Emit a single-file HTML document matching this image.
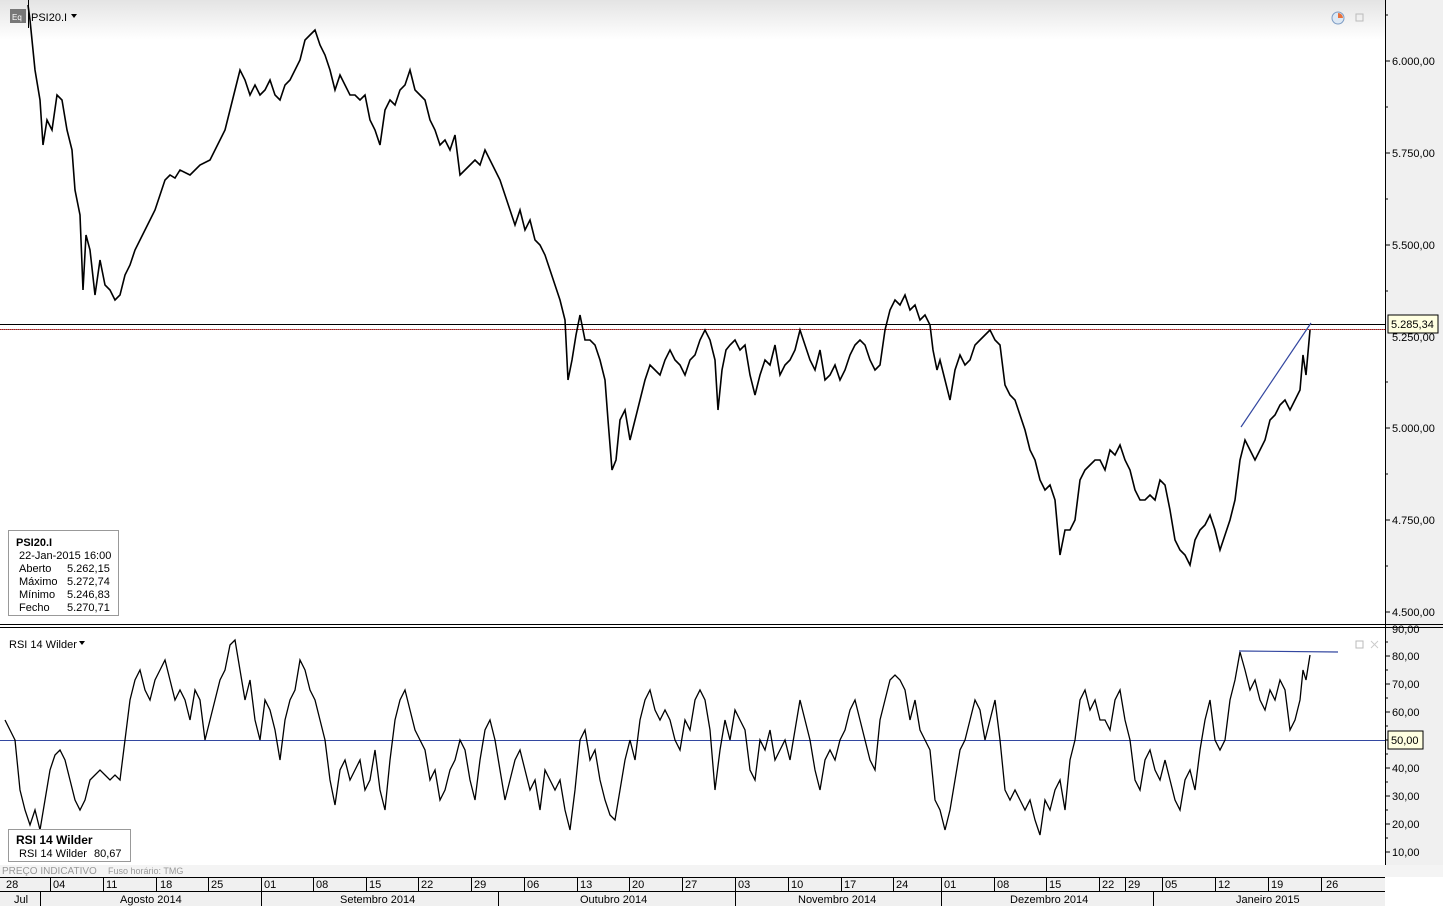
<!DOCTYPE html>
<html><head><meta charset="utf-8"><style>
*{margin:0;padding:0;box-sizing:border-box}
body{width:1443px;height:906px;overflow:hidden;background:#fff;font-family:"Liberation Sans","DejaVu Sans",sans-serif;position:relative}
.t{position:absolute;font-size:11px;color:#000;white-space:nowrap}
</style></head><body>
<svg width="1443" height="906" style="position:absolute;left:0;top:0" font-family="Liberation Sans, DejaVu Sans, sans-serif" font-size="11">
<defs><linearGradient id="g" x1="0" y1="0" x2="0" y2="1"><stop offset="0" stop-color="#e4e4e4"/><stop offset="1" stop-color="#ffffff"/></linearGradient></defs>
<rect x="0" y="0" width="1385" height="40" fill="url(#g)"/>
<rect x="1385" y="0" width="58" height="877" fill="#f0f0f0"/>
<line x1="1385.5" y1="0" x2="1385.5" y2="877" stroke="#000"/>
<!-- price axis ticks -->
<g stroke="#000">
<line x1="1385" y1="61" x2="1390" y2="61"/><line x1="1385" y1="153" x2="1390" y2="153"/><line x1="1385" y1="245" x2="1390" y2="245"/><line x1="1385" y1="428" x2="1390" y2="428"/><line x1="1385" y1="520" x2="1390" y2="520"/><line x1="1385" y1="612" x2="1390" y2="612"/>
<line x1="1385" y1="15" x2="1388" y2="15"/><line x1="1385" y1="107" x2="1388" y2="107"/><line x1="1385" y1="199" x2="1388" y2="199"/><line x1="1385" y1="291" x2="1388" y2="291"/><line x1="1385" y1="382" x2="1388" y2="382"/><line x1="1385" y1="474" x2="1388" y2="474"/><line x1="1385" y1="566" x2="1388" y2="566"/>
</g>
<g fill="#000">
<text x="1392" y="65">6.000,00</text><text x="1392" y="157">5.750,00</text><text x="1392" y="249">5.500,00</text><text x="1392" y="341">5.250,00</text><text x="1392" y="432">5.000,00</text><text x="1392" y="524">4.750,00</text><text x="1392" y="616">4.500,00</text>
</g>
<!-- horizontal lines -->
<line x1="0" y1="324.5" x2="1385" y2="324.5" stroke="#000"/>
<line x1="0" y1="329.5" x2="1385" y2="329.5" stroke="#c00" stroke-dasharray="1,1"/>
<line x1="0" y1="329.5" x2="1385" y2="329.5" stroke="#000" stroke-dasharray="1,1" stroke-dashoffset="1" opacity=".5"/>
<rect x="1388" y="315" width="50" height="18" fill="#ffffe1" stroke="#000"/>
<text x="1391" y="328">5.285,34</text>
<!-- price line -->
<polyline fill="none" stroke="#000" stroke-width="1.6" points="28,5 30,20 35,70 40,100 43,145 47,120 52,130 57,95 62,100 67,130 72,150 75,190 80,215 83,290 86,235 90,250 95,295 100,260 105,285 110,290 115,300 120,295 125,275 130,265 135,250 140,240 145,230 150,220 155,210 160,195 165,180 170,175 175,178 180,170 190,175 200,165 210,160 215,150 220,140 225,130 230,110 235,90 240,70 245,80 250,95 255,85 260,95 265,90 270,80 275,95 280,100 285,85 290,80 295,70 300,60 305,40 310,35 315,30 320,45 325,55 330,70 335,90 340,75 345,85 350,95 355,95 360,100 365,95 370,120 375,130 380,145 385,110 390,100 395,105 400,90 405,85 410,70 415,90 420,95 425,100 430,120 435,130 440,145 445,140 450,150 455,135 460,175 465,170 470,165 475,160 480,165 485,150 490,160 495,170 500,180 505,195 510,210 515,225 520,210 525,230 530,220 535,240 540,245 545,255 550,270 555,285 560,300 565,320 568,380 572,360 576,335 580,315 585,340 590,340 595,345 600,360 605,380 608,420 612,470 616,460 620,420 625,410 630,440 635,420 640,400 645,380 650,365 655,370 660,375 665,360 670,350 675,360 680,365 685,375 690,360 695,355 700,340 705,330 710,340 715,360 718,410 722,370 726,350 730,345 735,340 740,350 745,345 750,375 755,395 760,375 765,360 770,365 775,345 780,375 785,365 790,360 795,350 800,330 805,345 810,360 815,370 820,350 825,380 830,375 835,365 840,380 845,370 850,355 855,345 860,340 865,345 870,360 875,370 880,365 885,330 890,310 895,300 900,305 905,295 910,310 915,305 920,320 925,315 930,325 933,350 937,370 940,360 945,380 950,400 955,370 960,355 965,365 970,360 975,345 980,340 985,335 990,330 995,340 1000,345 1005,385 1010,395 1015,400 1020,415 1025,430 1030,450 1035,460 1040,480 1045,490 1050,485 1055,500 1060,555 1065,530 1070,530 1075,520 1080,480 1085,470 1090,465 1095,460 1100,460 1105,470 1110,450 1115,455 1120,445 1125,460 1130,470 1135,490 1140,500 1145,500 1150,495 1155,500 1160,480 1165,485 1170,510 1175,540 1180,550 1185,555 1190,565 1195,540 1200,530 1205,525 1210,515 1215,530 1220,550 1225,535 1230,520 1235,500 1240,460 1245,440 1250,450 1255,460 1260,450 1265,440 1270,420 1275,415 1280,405 1285,400 1290,410 1295,400 1300,390 1303,355 1306,375 1310,330"/>
<line x1="1241" y1="427" x2="1311" y2="323" stroke="#3347a0" stroke-width="1.2"/>
<!-- header -->
<rect x="10" y="9" width="16" height="14" fill="#777"/><text x="12" y="20" fill="#fff" font-size="8">Eq</text>
<line x1="28.5" y1="0" x2="28.5" y2="28" stroke="#000"/>
<text x="31" y="21" fill="#000">PSI20.I</text><path d="M71 14h6l-3 4z" fill="#000"/>
<circle cx="1338" cy="18" r="6" fill="#dde8f4" stroke="#7d9cc4"/><path d="M1338 18v-5a5 5 0 0 1 5 5z" fill="#e8703a"/>
<rect x="1356" y="14" width="7" height="7" fill="none" stroke="#bbb"/>
<!-- info box -->
<rect x="8.5" y="530.5" width="110" height="85" fill="#fff" stroke="#999"/>
<text x="16" y="546" font-weight="bold">PSI20.I</text>
<text x="19" y="559">22-Jan-2015 16:00</text>
<text x="19" y="572">Aberto</text><text x="67" y="572">5.262,15</text>
<text x="19" y="585">Máximo</text><text x="67" y="585">5.272,74</text>
<text x="19" y="598">Mínimo</text><text x="67" y="598">5.246,83</text>
<text x="19" y="611">Fecho</text><text x="67" y="611">5.270,71</text>
<!-- separator -->
<line x1="0" y1="624.5" x2="1443" y2="624.5" stroke="#000"/>
<line x1="0" y1="627.5" x2="1443" y2="627.5" stroke="#000"/>
<!-- RSI axis -->
<g stroke="#000">
<line x1="1385" y1="656" x2="1390" y2="656"/><line x1="1385" y1="684" x2="1390" y2="684"/><line x1="1385" y1="712" x2="1390" y2="712"/><line x1="1385" y1="740" x2="1390" y2="740"/><line x1="1385" y1="768" x2="1390" y2="768"/><line x1="1385" y1="796" x2="1390" y2="796"/><line x1="1385" y1="824" x2="1390" y2="824"/><line x1="1385" y1="852" x2="1390" y2="852"/>
<line x1="1385" y1="642" x2="1388" y2="642"/><line x1="1385" y1="670" x2="1388" y2="670"/><line x1="1385" y1="698" x2="1388" y2="698"/><line x1="1385" y1="726" x2="1388" y2="726"/><line x1="1385" y1="754" x2="1388" y2="754"/><line x1="1385" y1="782" x2="1388" y2="782"/><line x1="1385" y1="810" x2="1388" y2="810"/><line x1="1385" y1="838" x2="1388" y2="838"/>
</g>
<g fill="#000">
<text x="1392" y="633">90,00</text><text x="1392" y="660">80,00</text><text x="1392" y="688">70,00</text><text x="1392" y="716">60,00</text><text x="1392" y="772">40,00</text><text x="1392" y="800">30,00</text><text x="1392" y="828">20,00</text><text x="1392" y="856">10,00</text>
</g>
<line x1="0" y1="740.5" x2="1385" y2="740.5" stroke="#3347a0"/>
<rect x="1388" y="731" width="35" height="18" fill="#ffffe1" stroke="#000"/>
<text x="1391" y="744">50,00</text>
<text x="9" y="648" fill="#000">RSI 14 Wilder</text><path d="M79 641h6l-3 4z" fill="#000"/>
<rect x="1356" y="641" width="7" height="7" fill="none" stroke="#bbb"/>
<path d="M1371 641l7 7M1378 641l-7 7" stroke="#ccc"/>
<polyline fill="none" stroke="#000" stroke-width="1.3" points="5,720 10,730 15,740 20,790 25,810 30,825 35,810 40,830 45,800 50,770 55,755 60,750 65,760 70,780 75,800 80,810 85,800 90,780 95,775 100,770 105,775 110,780 115,775 120,780 125,740 130,700 135,680 140,670 145,690 150,700 155,680 160,670 165,660 170,680 175,700 180,690 185,700 190,720 195,690 200,700 205,740 210,720 215,700 220,680 225,670 230,645 235,640 240,670 245,700 250,680 255,720 260,740 265,700 270,710 275,730 280,760 285,720 290,700 295,690 300,660 305,670 310,690 315,700 320,720 325,740 330,780 335,805 340,770 345,760 350,780 355,770 360,760 365,790 370,780 375,750 380,790 385,810 390,760 395,720 400,700 405,690 410,710 415,730 420,740 425,750 430,780 435,770 440,800 445,790 450,770 455,760 460,740 465,750 470,780 475,800 480,760 485,730 490,720 495,740 500,770 505,800 510,780 515,760 520,750 525,770 530,790 535,780 540,810 545,770 550,780 555,790 560,780 565,810 570,830 575,790 580,740 585,730 590,760 595,750 600,780 605,800 610,815 615,820 620,790 625,760 630,740 635,760 640,720 645,700 650,690 655,710 660,720 665,710 670,720 675,740 680,750 685,720 690,730 695,700 700,690 705,700 710,730 715,790 720,750 725,720 730,740 735,710 740,720 745,730 750,770 755,780 760,740 765,750 770,730 775,760 780,750 785,740 790,760 795,730 800,700 805,720 810,740 815,770 820,790 825,760 830,750 835,760 840,740 845,730 850,710 855,700 860,720 865,740 870,760 875,770 880,720 885,700 890,680 895,675 900,680 905,690 910,720 915,700 920,730 925,740 930,750 935,800 940,810 945,830 950,810 955,780 960,750 965,740 970,720 975,700 980,710 985,740 990,720 995,700 1000,740 1005,790 1010,800 1015,790 1020,800 1025,810 1030,800 1035,820 1040,835 1045,800 1050,810 1055,790 1060,780 1065,810 1070,760 1075,740 1080,700 1085,690 1090,710 1095,700 1100,720 1105,720 1110,730 1115,700 1120,690 1125,720 1130,740 1135,780 1140,790 1145,760 1150,750 1155,770 1160,780 1165,760 1170,780 1175,800 1180,810 1185,780 1190,770 1195,790 1200,750 1205,720 1210,700 1215,740 1220,750 1225,740 1230,700 1235,680 1240,652 1245,670 1250,690 1255,680 1260,700 1265,710 1270,690 1275,700 1280,680 1285,690 1290,730 1295,720 1300,700 1303,670 1306,680 1310,655"/>
<line x1="1239" y1="651" x2="1338" y2="652" stroke="#3347a0" stroke-width="1.2"/>
<rect x="8.5" y="829.5" width="122" height="32" fill="#fff" stroke="#999"/>
<text x="16" y="844" font-weight="bold" font-size="12">RSI 14 Wilder</text>
<text x="19" y="857">RSI 14 Wilder</text><text x="94" y="857">80,67</text>
<!-- footer -->
<rect x="0" y="865" width="1443" height="12" fill="#f4f4f4"/>
<text x="2" y="874" fill="#999" font-size="10">PREÇO INDICATIVO</text><text x="108" y="874" fill="#999" font-size="9">Fuso horário: TMG</text>
<rect x="0" y="877" width="1385" height="29" fill="#f0f0f0"/>
<line x1="0" y1="877.5" x2="1385" y2="877.5" stroke="#000"/>
<line x1="0" y1="891.5" x2="1385" y2="891.5" stroke="#000"/>
<g stroke="#000">
<line x1="50.5" y1="877" x2="50.5" y2="891"/><line x1="103.5" y1="877" x2="103.5" y2="891"/><line x1="156.5" y1="877" x2="156.5" y2="891"/><line x1="208.5" y1="877" x2="208.5" y2="891"/><line x1="261.5" y1="877" x2="261.5" y2="891"/><line x1="313.5" y1="877" x2="313.5" y2="891"/><line x1="366.5" y1="877" x2="366.5" y2="891"/><line x1="418.5" y1="877" x2="418.5" y2="891"/><line x1="471.5" y1="877" x2="471.5" y2="891"/><line x1="524.5" y1="877" x2="524.5" y2="891"/><line x1="577.5" y1="877" x2="577.5" y2="891"/><line x1="629.5" y1="877" x2="629.5" y2="891"/><line x1="682.5" y1="877" x2="682.5" y2="891"/><line x1="735.5" y1="877" x2="735.5" y2="891"/><line x1="788.5" y1="877" x2="788.5" y2="891"/><line x1="841.5" y1="877" x2="841.5" y2="891"/><line x1="893.5" y1="877" x2="893.5" y2="891"/><line x1="941.5" y1="877" x2="941.5" y2="891"/><line x1="994.5" y1="877" x2="994.5" y2="891"/><line x1="1046.5" y1="877" x2="1046.5" y2="891"/><line x1="1099.5" y1="877" x2="1099.5" y2="891"/><line x1="1125.5" y1="877" x2="1125.5" y2="891"/><line x1="1162.5" y1="877" x2="1162.5" y2="891"/><line x1="1215.5" y1="877" x2="1215.5" y2="891"/><line x1="1268.5" y1="877" x2="1268.5" y2="891"/><line x1="1321.5" y1="877" x2="1321.5" y2="891"/>
<line x1="40.5" y1="891" x2="40.5" y2="906"/><line x1="261.5" y1="891" x2="261.5" y2="906"/><line x1="498.5" y1="891" x2="498.5" y2="906"/><line x1="735.5" y1="891" x2="735.5" y2="906"/><line x1="941.5" y1="891" x2="941.5" y2="906"/><line x1="1153.5" y1="891" x2="1153.5" y2="906"/>
</g>
<g fill="#000">
<text x="6" y="888">28</text><text x="53" y="888">04</text><text x="106" y="888">11</text><text x="160" y="888">18</text><text x="211" y="888">25</text><text x="264" y="888">01</text><text x="316" y="888">08</text><text x="369" y="888">15</text><text x="421" y="888">22</text><text x="474" y="888">29</text><text x="527" y="888">06</text><text x="580" y="888">13</text><text x="632" y="888">20</text><text x="685" y="888">27</text><text x="738" y="888">03</text><text x="791" y="888">10</text><text x="844" y="888">17</text><text x="896" y="888">24</text><text x="944" y="888">01</text><text x="997" y="888">08</text><text x="1049" y="888">15</text><text x="1102" y="888">22</text><text x="1128" y="888">29</text><text x="1165" y="888">05</text><text x="1218" y="888">12</text><text x="1271" y="888">19</text><text x="1326" y="888">26</text>
<text x="14" y="903">Jul</text><text x="120" y="903">Agosto 2014</text><text x="340" y="903">Setembro 2014</text><text x="580" y="903">Outubro 2014</text><text x="798" y="903">Novembro 2014</text><text x="1010" y="903">Dezembro 2014</text><text x="1236" y="903">Janeiro 2015</text>
</g>
</svg>
</body></html>
